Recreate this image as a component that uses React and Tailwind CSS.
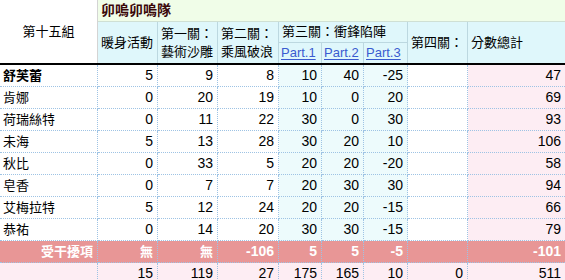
const cols = 'grid grid-cols-[98px_60px_60px_61px_43px_42px_44px_60px_97px]'

const rows = [
  { name: '舒芙蕾', bold: true, v: [5, 9, 8, 10, 40, -25, '', 47] },
  { name: '肯娜', v: [0, 20, 19, 10, 0, 20, '', 69] },
  { name: '荷瑞絲特', v: [0, 11, 22, 30, 0, 30, '', 93] },
  { name: '未海', v: [5, 13, 28, 30, 20, 10, '', 106] },
  { name: '秋比', v: [0, 33, 5, 20, 20, -20, '', 58] },
  { name: '皂香', v: [0, 7, 7, 20, 30, 30, '', 94] },
  { name: '艾梅拉特', v: [5, 12, 24, 20, 20, -15, '', 66] },
  { name: '恭祐', v: [0, 14, 20, 30, 30, -15, '', 79] },
]

const bodyBg = ['bg-white', 'bg-white', 'bg-white', 'bg-[#edfbfc]', 'bg-[#edfbfc]', 'bg-[#edfbfc]', 'bg-white', 'bg-[#fdedf3]']

const dot = 'border-b border-dotted border-[#9ec3e4]'

function Num({ children, className = '', last }) {
  return (
    <div
      className={`h-[22px] flex items-center justify-end pr-[4px] text-[14px] ${dot} ${last ? '' : 'border-r'} ${className}`}
    >
      {children}
    </div>
  )
}

function Head({ className = '', children }) {
  return (
    <div className={`bg-[#dff7fb] border-r border-[#bcd8e0] flex items-center pl-[3px] text-[13px] leading-[18px] whitespace-nowrap ${className}`}>
      {children}
    </div>
  )
}

function PartLink({ children, className = '' }) {
  return (
    <div className={`bg-[#dff7fb] border-r border-[#bcd8e0] flex items-center pl-[2px] ${className}`}>
      <a href="#" className="text-[13px] text-[#3a5bd0] underline underline-offset-2">
        {children}
      </a>
    </div>
  )
}

export default function App() {
  return (
    <div className="w-[565px] h-[280px] overflow-hidden bg-white text-black font-['Liberation_Sans','Noto_Sans_CJK_TC',sans-serif]">
      <div className={`${cols} grid-rows-[22px_21px_20px]`}>
        <div className="col-start-1 row-start-1 row-span-3 bg-white border-r border-[#d4d4d4] flex items-center justify-center text-[13px]">
          第十五組
        </div>
        <div className="col-start-2 col-span-8 row-start-1 bg-[#f0fde8] border-b border-[#cfe0d4] flex items-center pl-[3px] text-[14px] font-bold text-[#3a0808]">
          卯嗚卯嗚隊
        </div>
        <Head className="col-start-2 row-start-2 row-span-2">暖身活動</Head>
        <Head className="col-start-3 row-start-2 row-span-2">
          <div>
            第一關：
            <br />
            藝術沙雕
          </div>
        </Head>
        <Head className="col-start-4 row-start-2 row-span-2">
          <div>
            第二關：
            <br />
            乘風破浪
          </div>
        </Head>
        <Head className="col-start-5 col-span-3 row-start-2 border-b">第三關：衝鋒陷陣</Head>
        <PartLink className="col-start-5 row-start-3">Part.1</PartLink>
        <PartLink className="col-start-6 row-start-3">Part.2</PartLink>
        <PartLink className="col-start-7 row-start-3">Part.3</PartLink>
        <Head className="col-start-8 row-start-2 row-span-2">第四關：</Head>
        <Head className="col-start-9 row-start-2 row-span-2 border-r-0">分數總計</Head>
      </div>
      <div className="h-[2px] bg-black" />
      <div className={cols}>
        {rows.map((r) => (
          <div key={r.name} className="contents">
            <div
              className={`h-[22px] flex items-center pl-[3px] text-[13px] border-r ${dot} ${r.bold ? 'font-bold' : ''}`}
            >
              {r.name}
            </div>
            {r.v.map((n, i) => (
              <Num key={i} className={bodyBg[i]} last={i === 7}>
                {n}
              </Num>
            ))}
          </div>
        ))}
        <div className={`h-[22px] flex items-center justify-end pr-[4px] text-[13px] font-bold text-white bg-[#e89696] border-r ${dot}`}>
          受干擾項
        </div>
        {['無', '無', -106, 5, 5, -5, '', -101].map((n, i) => (
          <Num key={i} className="bg-[#e89696] text-white font-bold" last={i === 7}>
            {n === '無' ? <span className="text-[13px]">{n}</span> : n}
          </Num>
        ))}
        <div className={`h-[22px] bg-[#fdedf3] border-r ${dot}`} />
        {[15, 119, 27, 175, 165, 10, 0, 511].map((n, i) => (
          <Num key={i} className="bg-[#fdedf3]" last={i === 7}>
            {n}
          </Num>
        ))}
      </div>
    </div>
  )
}
